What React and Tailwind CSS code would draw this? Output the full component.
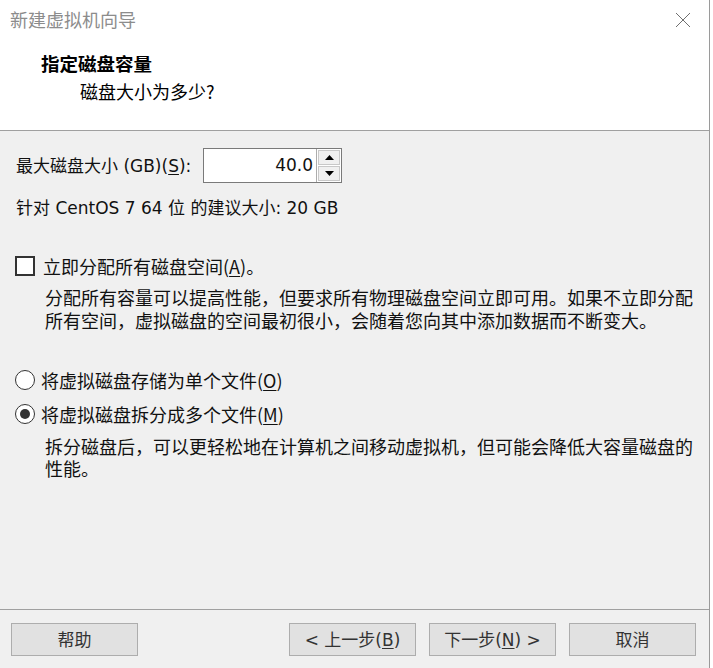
import React from "react"

const font = { fontFamily: '"DejaVu Sans", "Noto Sans CJK SC", sans-serif' }
const cjk = { fontFamily: '"Noto Sans CJK SC", "DejaVu Sans", sans-serif' }

const U = ({ children }) => <span className="underline underline-offset-2">{children}</span>

const Radio = ({ checked }) => (
  <span className="w-[20px] h-[20px] rounded-full border border-[#333] bg-white flex items-center justify-center shrink-0">
    {checked && <span className="w-[10px] h-[10px] rounded-full bg-[#333]" />}
  </span>
)

const Button = ({ children, className = "" }) => (
  <button
    className={`w-[127px] h-[33px] bg-[#e1e1e1] border border-[#adadad] text-[#333] text-[17px] leading-[20px] flex items-center justify-center ${className}`}
  >
    <span className="whitespace-pre">{children}</span>
  </button>
)

export default function App() {
  return (
    <div className="w-[713px] h-[668px] flex bg-white overflow-hidden text-[#111]" style={font}>
      <div className="w-[710px] h-full flex flex-col border-r border-[#9a9a9a] bg-[#f0f0f0]">
        {/* header */}
        <div className="h-[131px] bg-white border-b border-[#a0a0a0] flex flex-col" style={cjk}>
          <div className="flex items-center justify-between h-[38px] pl-[10px] pr-[18px]">
            <span className="text-[18px] leading-[22px] text-[#8c8c8c]">新建虚拟机向导</span>
            <svg width="16" height="16" viewBox="0 0 16 16" className="mt-[1px]">
              <path d="M1 1L15 15M15 1L1 15" stroke="#6f6f6f" strokeWidth="1" />
            </svg>
          </div>
          <div className="pl-[41px] pt-[14px] text-[18.5px] font-bold leading-[22px] text-black">指定磁盘容量</div>
          <div className="pl-[80px] pt-[6px] text-[18px] leading-[22px] text-black">磁盘大小为多少?</div>
        </div>

        {/* body */}
        <div className="flex-1 flex flex-col pl-[15px] pr-[8px] pt-[17px]">
          <div className="flex items-center">
            <span className="w-[188px] pl-[1px] whitespace-nowrap text-[17px] leading-[22px]">
              <span style={cjk}>最大磁盘大小</span> (GB)(<U>S</U>):
            </span>
            <div className="flex h-[35px] border border-[#7a7a7a] bg-white">
              <div className="w-[112px] flex items-center justify-end pr-[3px] text-[17px]">40.0</div>
              <div className="w-[25px] flex flex-col border-l border-[#adadad] p-[1px] gap-[1px]">
                <div className="flex-1 bg-[#f0f0f0] border border-[#c8c8c8] flex items-center justify-center">
                  <svg width="9" height="5" viewBox="0 0 9 5"><path d="M0 5L4.5 0L9 5Z" fill="#000" /></svg>
                </div>
                <div className="flex-1 bg-[#f0f0f0] border border-[#c8c8c8] flex items-center justify-center">
                  <svg width="9" height="5" viewBox="0 0 9 5"><path d="M0 0L4.5 5L9 0Z" fill="#000" /></svg>
                </div>
              </div>
            </div>
          </div>

          <div className="mt-[13px] pl-[1px] h-[22px] text-[17px] leading-[22px] whitespace-nowrap">
            <span style={cjk}>针对</span> CentOS 7 64 <span style={cjk}>位</span>{" "}
            <span style={cjk}>的建议大小</span>: 20 GB
          </div>

          <div className="mt-[37px] h-[22px] flex items-center gap-[8px]">
            <span className="w-[20px] h-[20px] border-2 border-[#333] bg-white shrink-0" />
            <span className="text-[18px] leading-[22px] whitespace-nowrap" style={cjk}>
              立即分配所有磁盘空间(<U>A</U>)。
            </span>
          </div>
          <div className="mt-[9px] pl-[30px] text-[18px] leading-[23px] text-[#111]" style={cjk}>
            分配所有容量可以提高性能，但要求所有物理磁盘空间立即可用。如果不立即分配所有空间，虚拟磁盘的空间最初很小，会随着您向其中添加数据而不断变大。
          </div>

          <div className="mt-[37px] h-[22px] flex items-center gap-[6px]">
            <Radio />
            <span className="text-[18px] leading-[22px] whitespace-nowrap" style={cjk}>
              将虚拟磁盘存储为单个文件(<U>O</U>)
            </span>
          </div>
          <div className="mt-[12px] h-[22px] flex items-center gap-[6px]">
            <Radio checked />
            <span className="text-[18px] leading-[22px] whitespace-nowrap" style={cjk}>
              将虚拟磁盘拆分成多个文件(<U>M</U>)
            </span>
          </div>
          <div className="mt-[10px] pl-[30px] text-[18px] leading-[22px] text-[#111]" style={cjk}>
            拆分磁盘后，可以更轻松地在计算机之间移动虚拟机，但可能会降低大容量磁盘的性能。
          </div>
        </div>

        {/* footer */}
        <div className="h-[59px] border-t border-[#a0a0a0] flex items-start pt-[13px] pl-[11px]">
          <Button>
            <span style={cjk}>帮助</span>
          </Button>
          <Button className="ml-[151px]">
            {"< "}
            <span style={cjk}>上一步</span>(<U>B</U>)
          </Button>
          <Button className="ml-[13px]">
            <span style={cjk}>下一步</span>(<U>N</U>){" >"}
          </Button>
          <Button className="ml-[13px]">
            <span style={cjk}>取消</span>
          </Button>
        </div>
      </div>
      <div className="flex-1 bg-white" />
    </div>
  )
}
